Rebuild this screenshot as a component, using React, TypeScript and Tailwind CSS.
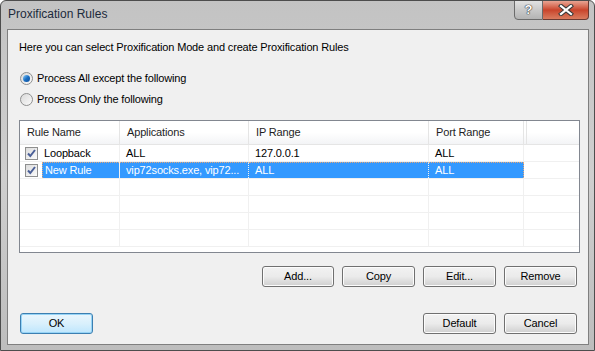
const rows = [
  { checked: true, name: "Loopback", apps: "ALL", ip: "127.0.0.1", port: "ALL", selected: false },
  { checked: true, name: "New Rule", apps: "vip72socks.exe, vip72...", ip: "ALL", port: "ALL", selected: true },
];

function CheckBox() {
  return (
    <div className="w-[13px] h-[13px] border border-[#8e8f8f] bg-gradient-to-br from-[#dcdcdc] to-[#fbfbfb] flex items-center justify-center">
      <svg width="11" height="11" viewBox="0 0 11 11">
        <path d="M2 5.5 L4.3 8 L9 2" fill="none" stroke="#4a5f97" strokeWidth="2" />
      </svg>
    </div>
  );
}

function Radio({ on }: { on: boolean }) {
  return (
    <div className="w-[13px] h-[13px] rounded-full border border-[#8e8f8f] bg-gradient-to-br from-[#d9d9d9] to-[#fafafa] flex items-center justify-center">
      {on && <div className="w-[7px] h-[7px] rounded-full bg-gradient-to-br from-[#8ad4ff] via-[#1b6fc2] to-[#0d4f9c]" />}
    </div>
  );
}

function Btn({ label, primary, w = "w-[73px]" }: { label: string; primary?: boolean; w?: string }) {
  return (
    <div
      className={
        primary
          ? `${w} h-[21px] rounded-[3px] border border-[#3c7fb1] bg-gradient-to-b from-[#eaf6fd] via-[#d9f0fc] to-[#bee6fd] shadow-[inset_0_0_0_1px_#97d4f6] flex items-center justify-center`
          : `${w} h-[21px] rounded-[3px] border border-[#707070] bg-gradient-to-b from-[#f2f2f2] via-[#ebebeb] to-[#cfcfcf] shadow-[inset_0_0_0_1px_#fcfcfc] flex items-center justify-center`
      }
    >
      <span className="text-[11px] text-black leading-none">{label}</span>
    </div>
  );
}

const cols = ["w-[100px]", "w-[129px]", "w-[180px]", "w-[95px]"];

export default function App() {
  return (
    <div
      className="w-[595px] h-[351px] overflow-hidden bg-gradient-to-b from-[#c3c3c3] via-[#cfcfcf] to-[#bdbdbd] border border-[#4d4d4d] rounded-t-[6px] flex flex-col"
      style={{ fontFamily: '"Liberation Sans", Arial, sans-serif' }}
    >
      {/* title bar */}
      <div className="h-[28px] flex items-start justify-between shrink-0">
        <span className="mt-[4px] ml-[7px] text-[12px] text-[#1c2a3c]">Proxification Rules</span>
        <div className="flex mr-[5px] -mt-px">
          <div className="w-[29px] h-[20px] rounded-bl-[4px] border border-[#6b6b6b] bg-gradient-to-b from-[#e2e2e2] via-[#c9c9c9] to-[#b4b4b4] flex items-center justify-center">
            <span className="text-[13px] font-bold text-white [text-shadow:0_0_1px_#333,0_0_1px_#333,0_0_1px_#333]">?</span>
          </div>
          <div className="w-[46px] h-[20px] rounded-br-[4px] border border-l-0 border-[#6b3a32] bg-gradient-to-b from-[#e8a493] via-[#c9442b] to-[#d97c5f] flex items-center justify-center">
            <svg width="16" height="12" viewBox="0 0 16 12">
              <path d="M3 2 L13 10 M13 2 L3 10" stroke="#3b3b3b" strokeWidth="4.2" strokeLinecap="square" />
              <path d="M3 2 L13 10 M13 2 L3 10" stroke="#ffffff" strokeWidth="2.2" strokeLinecap="square" />
            </svg>
          </div>
        </div>
      </div>

      {/* client area */}
      <div className="ml-[6px] mr-[5px] h-[316px] border border-[#7f7f7f] bg-[#f0f0f0] text-[11px] tracking-[-0.15px] text-black flex flex-col">
        <div className="pl-[11px] pt-[11px] leading-[13px]">Here you can select Proxification Mode and create Proxification Rules</div>

        <div className="pl-[12px] mt-[18px] flex flex-col gap-[8px]">
          <div className="flex items-center gap-[4px] h-[13px]">
            <Radio on />
            <span>Process All except the following</span>
          </div>
          <div className="flex items-center gap-[4px] h-[13px]">
            <Radio on={false} />
            <span>Process Only the following</span>
          </div>
        </div>

        {/* list view */}
        <div className="ml-[11px] mt-[14px] w-[561px] h-[133px] border border-[#828790] bg-white flex flex-col overflow-hidden">
          <div className="h-[24px] flex shrink-0 bg-gradient-to-b from-white via-white to-[#f3f4f6] border-b border-[#e5e5e5]">
            {["Rule Name", "Applications", "IP Range", "Port Range"].map((h, i) => (
              <div key={h} className={`${cols[i]} shrink-0 border-r border-[#e5e5e5] flex items-center pl-[7px] text-[#1e1e1e]`}>
                {h}
              </div>
            ))}
            <div className="w-[3px] border-r border-[#e5e5e5]" />
          </div>
          {[0, 1, 2, 3, 4, 5].map((i) => {
            const r = rows[i];
            return (
              <div key={i} className="h-[17px] flex shrink-0 border-b border-[#f0f0f0]">
                <div className={`${cols[0]} shrink-0 border-r border-[#f0f0f0] flex items-center`}>
                  {r && (
                    <>
                      <div className="ml-[5px] mr-[4px]"><CheckBox /></div>
                      <div
                        className={
                          r.selected
                            ? "flex-1 h-full bg-[#3399ff] text-white flex items-center pl-[2px] border-t border-l border-dotted border-[#e3a77a]"
                            : "flex-1 flex items-center pl-[2px]"
                        }
                      >
                        {r.name}
                      </div>
                    </>
                  )}
                </div>
                {[r?.apps, r?.ip, r?.port].map((t, j) => (
                  <div
                    key={j}
                    className={`${cols[j + 1]} shrink-0 border-r ${r?.selected ? "bg-[#3399ff] text-white border-[#f0f0f0] border-t border-dotted border-t-[#e3a77a]" : "border-[#f0f0f0]"} ${r?.selected && j === 2 ? "border-r-[#e3a77a] border-dotted" : ""} flex items-center pl-[6px] whitespace-nowrap overflow-hidden`}
                  >
                    {t}
                  </div>
                ))}
                <div className="flex-1" />
              </div>
            );
          })}
        </div>

        {/* action buttons */}
        <div className="mt-[13px] mr-[11px] flex justify-end gap-[8px]">
          <Btn label="Add..." w="w-[72px]" />
          <Btn label="Copy" />
          <Btn label="Edit..." />
          <Btn label="Remove" />
        </div>

        {/* bottom buttons */}
        <div className="mt-[26px] ml-[12px] mr-[11px] flex items-center">
          <Btn label="OK" primary />
          <div className="flex-1" />
          <div className="flex gap-[8px]">
            <Btn label="Default" />
            <Btn label="Cancel" />
          </div>
        </div>
      </div>
    </div>
  );
}
